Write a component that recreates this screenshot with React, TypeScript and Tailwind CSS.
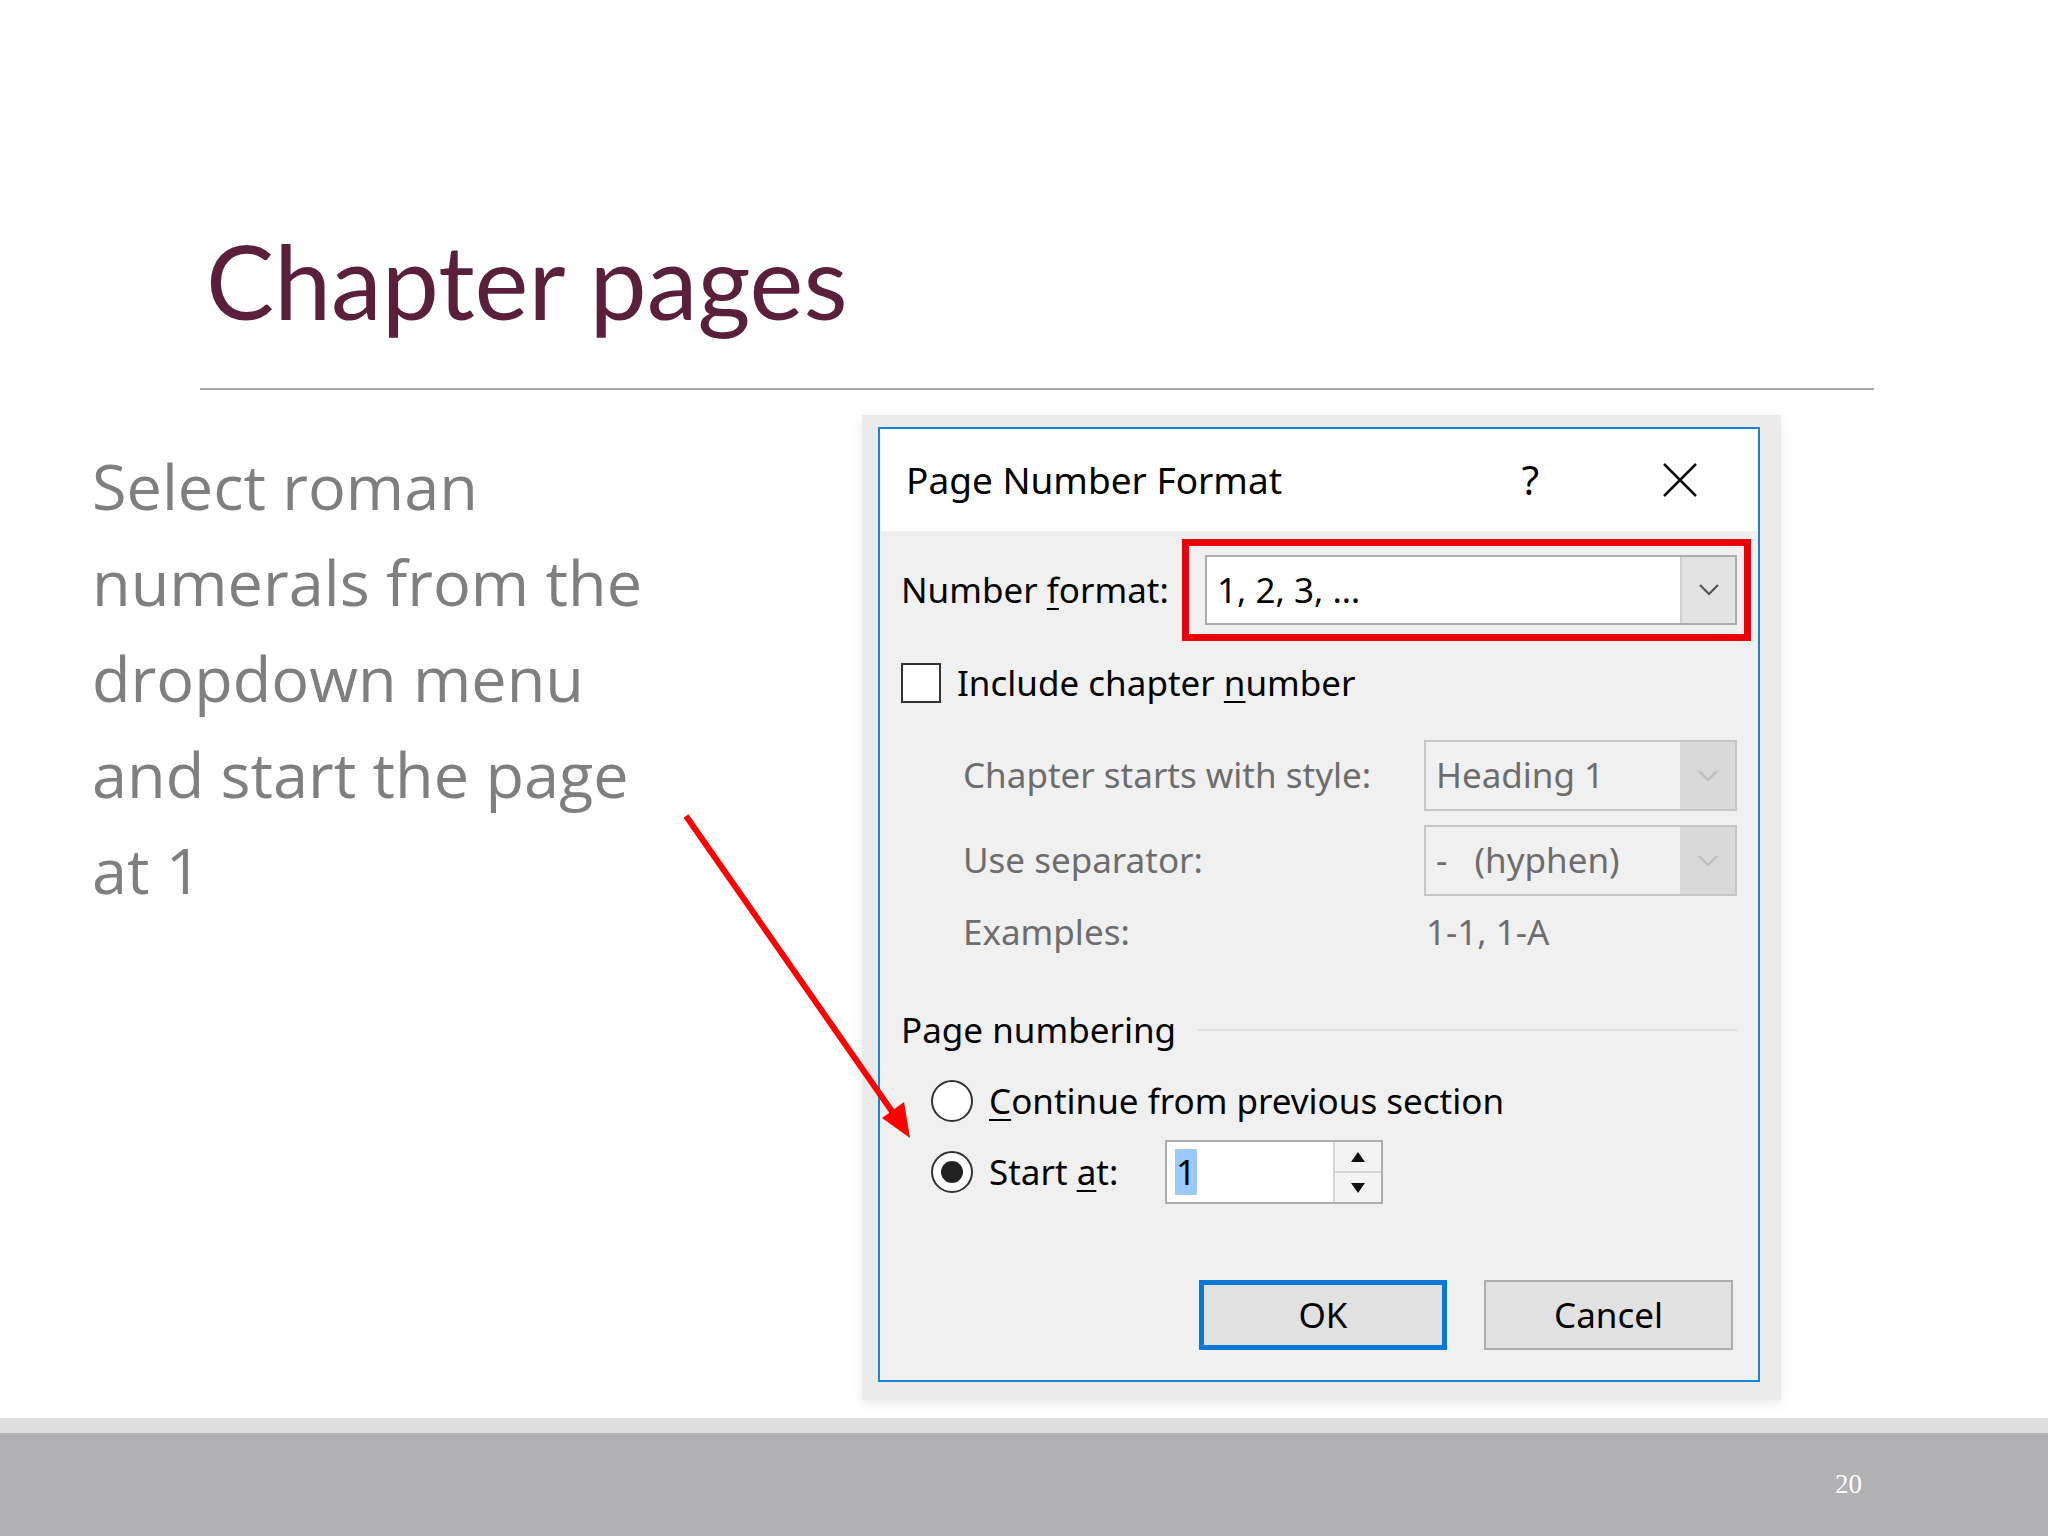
import React from "react";

const U = ({ c }: { c: string }) => <span className="underline underline-offset-[5px] decoration-[2px]">{c}</span>;

const Chevron = ({ color }: { color: string }) => (
  <svg width="22" height="14" viewBox="0 0 22 14"><path d="M2 2 L11 11 L20 2" fill="none" stroke={color} strokeWidth="2.2" /></svg>
);

const Combo = ({ text, disabled, w, h }: { text: string; disabled?: boolean; w: number; h: number }) => (
  <div className={`flex border-2 ${disabled ? "border-[#c6c6c6] bg-[#f0f0f0] text-[#6d6d6d]" : "border-[#adadad] bg-white text-black"}`} style={{ width: w, height: h }}>
    <div className="flex-1 flex items-center pl-[10px] whitespace-pre">{text}</div>
    <div className={`w-[55px] flex items-center justify-center ${disabled ? "bg-[#d9d9d9]" : "bg-[#e3e3e3] border-l-2 border-[#d0d0d0]"}`}>
      <Chevron color={disabled ? "#bdbdbd" : "#555"} />
    </div>
  </div>
);

export default function App() {
  return (
    <div className="w-[2048px] h-[1536px] relative bg-white flex flex-col overflow-hidden" style={{ fontFamily: "Lato, 'Noto Sans', sans-serif" }}>
      <div className="h-[388px] pl-[206px] pt-[230px]">
        <div className="text-[102px] leading-none text-[#5a1f3b]">Chapter pages</div>
      </div>
      <div className="ml-[200px] w-[1674px] h-[2px] bg-[#a6a6a6]" />
      <div className="flex mt-[25px]">
        <div className="pl-[92px] pt-[23px] w-[862px] text-[63px] leading-[96px] text-[#7f7f7f]" style={{ fontFamily: "'Open Sans', sans-serif" }}>
          Select roman<br />numerals from the<br />dropdown menu<br />and start the page<br />at 1
        </div>
        <div className="bg-[#ebebeb] w-[919px] h-[985px] pl-[16px] pt-[12px] shadow-[0_4px_10px_rgba(0,0,0,0.08)]">
          <div className="w-[882px] h-[955px] border-2 border-[#1883d7] bg-[#f0f0f0] flex flex-col text-[35px] text-black" style={{ fontFamily: "'Noto Sans', sans-serif" }}>
            <div className="h-[102px] bg-white flex items-center pl-[26px] pr-[60px] text-[37px]">
              <span>Page Number Format</span>
              <span className="ml-auto mr-[123px] text-[40px]">?</span>
              <svg width="36" height="36" viewBox="0 0 36 36"><path d="M2 2 L34 34 M34 2 L2 34" stroke="#111" strokeWidth="2.5" /></svg>
            </div>
            <div className="pl-[21px] pr-[7px] flex flex-col">
              <div className="flex items-center mt-[8px]">
                <div className="w-[281px]">Number <U c="f" />ormat:</div>
                <div className="w-[569px] h-[102px] border-[7px] border-[#e8000b] flex items-center pl-[16px]">
                  <Combo text="1, 2, 3, …" w={532} h={70} />
                </div>
              </div>
              <div className="flex items-center mt-[22px] h-[40px]">
                <div className="w-[40px] h-[40px] border-2 border-[#333] bg-white" />
                <span className="ml-[16px]">Include chapter <U c="n" />umber</span>
              </div>
              <div className="flex items-center mt-[37px] text-[#6d6d6d]">
                <div className="w-[523px] pl-[62px]">Chapter starts with style:</div>
                <Combo text="Heading 1" disabled w={313} h={71} />
              </div>
              <div className="flex items-center mt-[14px] text-[#6d6d6d]">
                <div className="w-[523px] pl-[62px]">Use separator:</div>
                <Combo text={"-   (hyphen)"} disabled w={313} h={71} />
              </div>
              <div className="flex items-center mt-[16px] h-[40px] text-[#6d6d6d]">
                <div className="w-[523px] pl-[62px]">Examples:</div>
                <div className="pl-[2px]">1-1, 1-A</div>
              </div>
              <div className="flex items-center mt-[58px] h-[40px]">
                <span>Page numbering</span>
                <div className="ml-[22px] mr-[14px] flex-1 h-[2px] bg-[#dcdcdc]" />
              </div>
              <div className="flex items-center mt-[30px] h-[42px] pl-[30px]">
                <div className="w-[42px] h-[42px] rounded-full border-2 border-[#333] bg-white" />
                <span className="ml-[16px]"><U c="C" />ontinue from previous section</span>
              </div>
              <div className="flex items-center mt-[18px] h-[64px] pl-[30px]">
                <div className="w-[42px] h-[42px] rounded-full border-2 border-[#333] bg-white flex items-center justify-center">
                  <div className="w-[22px] h-[22px] rounded-full bg-[#222]" />
                </div>
                <span className="ml-[16px] w-[176px]">Start <U c="a" />t:</span>
                <div className="w-[218px] h-[64px] border-2 border-[#adadad] bg-white flex">
                  <div className="flex-1 flex items-center pl-[8px]"><span className="bg-[#99c9ff] leading-[46px] px-[1px]">1</span></div>
                  <div className="w-[48px] flex flex-col border-l-2 border-[#d6d6d6] bg-[#f4f4f4]">
                    <div className="flex-1 flex items-center justify-center border-b-2 border-[#d6d6d6]"><svg width="14" height="10" viewBox="0 0 14 10"><path d="M7 0 L14 10 L0 10Z" fill="#111" /></svg></div>
                    <div className="flex-1 flex items-center justify-center"><svg width="14" height="10" viewBox="0 0 14 10"><path d="M0 0 L14 0 L7 10Z" fill="#111" /></svg></div>
                  </div>
                </div>
              </div>
              <div className="flex justify-end gap-[37px] mt-[76px] pr-[18px]">
                <div className="w-[248px] h-[70px] border-[5px] border-[#0a78d7] bg-[#e1e1e1] flex items-center justify-center">OK</div>
                <div className="w-[249px] h-[70px] border-2 border-[#adadad] bg-[#e1e1e1] flex items-center justify-center">Cancel</div>
              </div>
            </div>
          </div>
        </div>
      </div>
      <div className="mt-auto">
        <div className="h-[15px] bg-[#dedede]" />
        <div className="h-[103px] bg-[#b1b0b2] flex items-center pl-[1835px] text-white text-[27px]" style={{ fontFamily: "'Liberation Serif', serif" }}>20</div>
      </div>
      <svg className="absolute left-0 top-0 pointer-events-none" width="2048" height="1536">
        <line x1="686" y1="816" x2="898" y2="1120" stroke="#ff0000" strokeWidth="6" />
        <path d="M910 1138 L882 1118 L904 1102 Z" fill="#ff0000" />
      </svg>
    </div>
  );
}
